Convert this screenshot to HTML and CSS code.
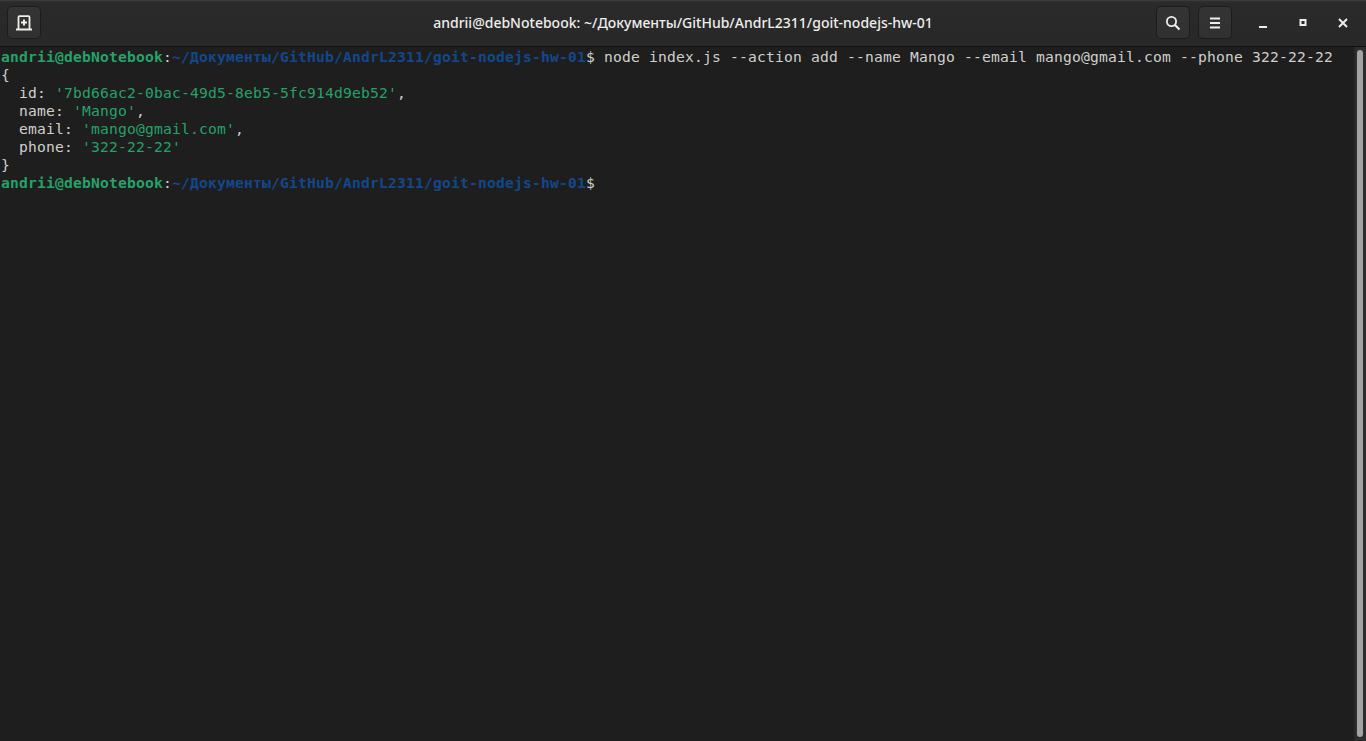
FILE: index.html
```html
<!DOCTYPE html>
<html lang="uk">
<head>
<meta charset="utf-8">
<title>Terminal</title>
<link rel="stylesheet" href="styles.css">
</head>
<body>
<div class="window">
  <header class="headerbar">
    <div class="side">
      <button class="btn" aria-label="New tab">
        <svg width="16" height="16" viewBox="0 0 16 16"><path d="M0 14.5h16M2.5 14V2.2q0-1 1-1h9q1 0 1 1V14" fill="none" stroke="#eeeeec" stroke-width="1.8"/><path d="M8 4.5v6M5 7.5h6" fill="none" stroke="#eeeeec" stroke-width="2"/></svg>
      </button>
    </div>
    <div class="title">andrii@debNotebook: ~/Документы/GitHub/AndrL2311/goit-nodejs-hw-01</div>
    <div class="side side-right">
      <button class="btn" aria-label="Search">
        <svg width="16" height="16" viewBox="0 0 16 16"><circle cx="6.5" cy="6.5" r="4.6" fill="none" stroke="#eeeeec" stroke-width="1.8"/><path d="M10 10l4.5 4.5" fill="none" stroke="#eeeeec" stroke-width="2.2"/></svg>
      </button>
      <button class="btn" aria-label="Menu">
        <svg width="16" height="16" viewBox="0 0 16 16"><path d="M3 3.5h10M3 8h10M3 12.5h10" fill="none" stroke="#eeeeec" stroke-width="1.8"/></svg>
      </button>
      <div class="wm">
        <span class="wm-btn"><svg width="16" height="16" viewBox="0 0 16 16"><path d="M4 12h8" stroke="#eeeeec" stroke-width="2"/></svg></span>
        <span class="wm-btn"><svg width="16" height="16" viewBox="0 0 16 16"><path d="M5.5 5h5v5h-5z" fill="none" stroke="#eeeeec" stroke-width="2"/></svg></span>
        <span class="wm-btn"><svg width="16" height="16" viewBox="0 0 16 16"><path d="M4 4l8 8M12 4l-8 8" stroke="#eeeeec" stroke-width="2"/></svg></span>
      </div>
    </div>
  </header>
  <main class="content">
    <div class="terminal">
<div class="line"><span class="user">andrii@debNotebook</span>:<span class="path">~/Документы/GitHub/AndrL2311/goit-nodejs-hw-01</span>$ node index.js --action add --name Mango --email mango@gmail.com --phone 322-22-22</div>
<div class="line">{</div>
<div class="line">  id: <span class="str">'7bd66ac2-0bac-49d5-8eb5-5fc914d9eb52'</span>,</div>
<div class="line">  name: <span class="str">'Mango'</span>,</div>
<div class="line">  email: <span class="str">'mango@gmail.com'</span>,</div>
<div class="line">  phone: <span class="str">'322-22-22'</span></div>
<div class="line">}</div>
<div class="line"><span class="user">andrii@debNotebook</span>:<span class="path">~/Документы/GitHub/AndrL2311/goit-nodejs-hw-01</span>$</div>
    </div>
    <div class="scrollbar"><div class="thumb"></div></div>
  </main>
</div>
</body>
</html>
```
FILE: styles.css
```css
* { box-sizing: border-box; }
html, body { margin: 0; height: 100%; background: #1e1e1e; overflow: hidden; }
.window { display: flex; flex-direction: column; height: 741px; width: 1366px; }
.headerbar {
  height: 47px;
  flex: none;
  display: flex;
  align-items: flex-start;
  justify-content: space-between;
  padding: 5px 3px 0 7px;
  background: linear-gradient(#303030, #2a2a2a 6%, #282828);
  border-top: 1px solid #3a3a3a;
  border-bottom: 1px solid #0f0f0f;
  position: relative;
}
.side { display: flex; gap: 8px; align-items: flex-start; }
.btn {
  width: 34px;
  height: 33px;
  padding: 0;
  display: flex;
  align-items: center;
  justify-content: center;
  background: linear-gradient(#343434, #313131);
  border: 1px solid #1c1c1c;
  border-radius: 5px;
}
.title {
  position: absolute;
  left: 0;
  right: 0;
  top: 13px;
  text-align: center;
  font-family: "Noto Sans", sans-serif;
  font-size: 14px;
  font-weight: 500;
  line-height: 18px;
  color: #eeeeec;
}
.wm { display: flex; margin-left: 3px; }
.wm-btn { width: 40px; height: 33px; display: flex; align-items: center; justify-content: center; }
.content { flex: 1; display: flex; min-height: 0; }
.terminal {
  flex: 1;
  padding: 1px 0 0 1px;
  font-family: "DejaVu Sans Mono", monospace;
  font-size: 14.667px;
  letter-spacing: 0.176px;
  line-height: 18px;
  color: #d0cfcc;
}
.line { height: 18px; white-space: pre; }
.user { color: #26a269; font-weight: 700; }
.path { color: #12488b; font-weight: 700; }
.str { color: #26a269; }
.scrollbar {
  width: 12px;
  flex: none;
  background: #2d2d2d;
  padding: 3px 3px 4px 2px;
  border-left: 1px solid #262626;
}
.thumb { height: 100%; width: 6px; background: #a3a3a3; border-radius: 3px; }
```
